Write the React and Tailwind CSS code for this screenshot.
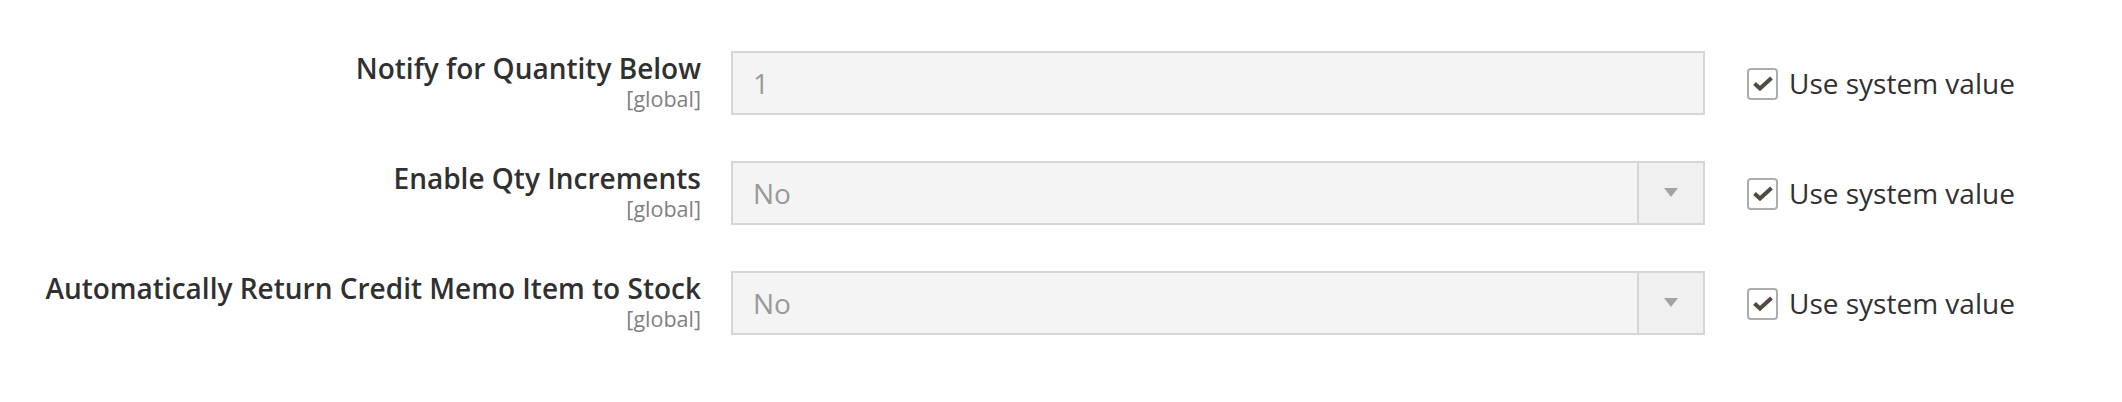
import React from "react";

function Check() {
  return (
    <span className="flex h-[32px] w-[31px] items-center justify-center rounded-[4px] border-2 border-[#adadad] bg-white">
      <svg width="22" height="17" viewBox="0 0 22 17">
        <path d="M2.5 8.5 L8 13.5 L19.5 3" fill="none" stroke="#514943" strokeWidth="4" strokeLinecap="butt" strokeLinejoin="miter" />
      </svg>
    </span>
  );
}

function Row({ label, value, select }) {
  return (
    <div className="flex items-start">
      <div className="flex w-[701px] shrink-0 flex-col items-end text-right">
        <span className="text-[28px] font-semibold leading-[34px] text-[#303030]">{label}</span>
        <span className="mt-[2px] text-[21.5px] leading-[24px] text-[#808080]">[global]</span>
      </div>
      <div className="ml-[30px] flex h-[64px] w-[974px] shrink-0 items-stretch border-2 border-[#d6d6d6] bg-[#f4f4f4]">
        <div className="flex flex-1 items-center pl-[20px] text-[28px] text-[#999999]">{value}</div>
        {select && (
          <div className="flex w-[66px] items-center justify-center border-l-2 border-[#d6d6d6] bg-[#f0f0f0]">
            <svg width="14" height="10" viewBox="0 0 14 10">
              <path d="M0 0 H14 L7 9 Z" fill="#a3a3a3" />
            </svg>
          </div>
        )}
      </div>
      <label className="ml-[42px] mt-[15px] flex items-center gap-[11px]">
        <Check />
        <span className="-mt-[1px] text-[28px] leading-[36px] text-[#303030]">Use system value</span>
      </label>
    </div>
  );
}

export default function App() {
  return (
    <div
      className="flex h-[402px] w-[2122px] flex-col gap-[46px] bg-white pt-[51px]"
      style={{ fontFamily: '"Open Sans", sans-serif' }}
    >
      <Row label="Notify for Quantity Below" value="1" />
      <Row label="Enable Qty Increments" value="No" select />
      <Row label="Automatically Return Credit Memo Item to Stock" value="No" select />
    </div>
  );
}
